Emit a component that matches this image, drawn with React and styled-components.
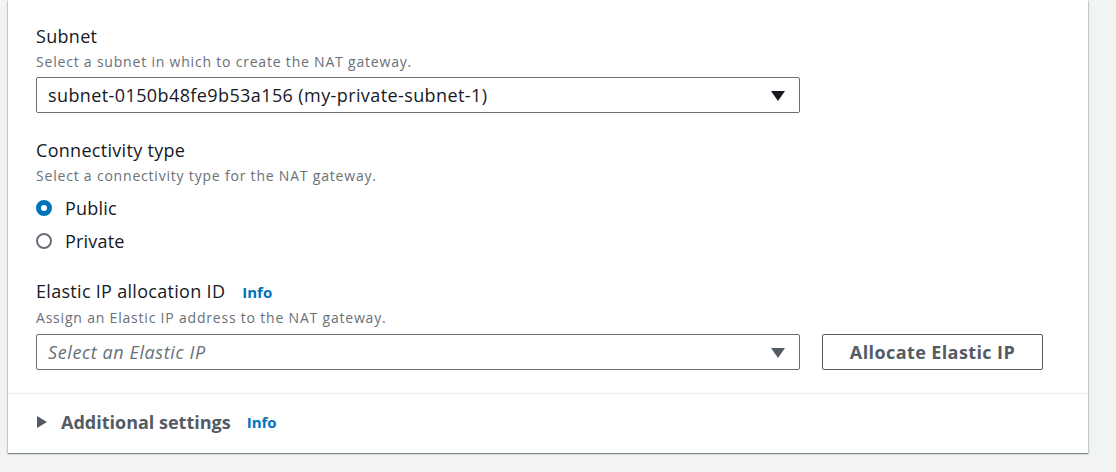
import React from "react";
import styled, { createGlobalStyle } from "styled-components";

const GlobalStyle = createGlobalStyle`
  html, body {
    margin: 0;
    padding: 0;
    background: #f2f3f3;
    font-family: "Open Sans", "Noto Sans", Arial, sans-serif;
  }
`;

const Page = styled.div`
  padding: 0 0 19px 8px;
`;

const Card = styled.div`
  width: 1080px;
  background: #fff;
  box-shadow: 0 1px 1px 0 rgba(0, 28, 36, 0.3), 1px 1px 1px 0 rgba(0, 28, 36, 0.15),
    -1px 1px 1px 0 rgba(0, 28, 36, 0.15);
`;

const Body = styled.div`
  padding: 25px 28px 23px 28px;
`;

const Field = styled.div`
  margin-bottom: ${(p) => p.$gap || 0}px;
`;

const Label = styled.div`
  display: flex;
  align-items: baseline;
  font-size: 18px;
  line-height: 22px;
  letter-spacing: 0.3px;
  color: #16191f;
`;

const Info = styled.a`
  margin-left: ${(p) => p.$ml || 17}px;
  font-size: 15px;
  font-weight: 700;
  letter-spacing: 0;
  color: #0073bb;
  text-decoration: none;
`;

const Description = styled.div`
  margin-top: 5px;
  font-size: 14px;
  line-height: 20px;
  letter-spacing: 0.8px;
  color: #687078;
`;

const ControlRow = styled.div`
  display: flex;
  align-items: center;
  gap: 22px;
  margin-top: ${(p) => p.$mt || 6}px;
`;

const Select = styled.div`
  box-sizing: border-box;
  width: 764px;
  height: 36px;
  display: flex;
  align-items: center;
  justify-content: space-between;
  padding: 0 14px 0 11px;
  border: 1px solid #687078;
  border-radius: 2px;
  font-size: 18px;
  letter-spacing: ${(p) => (p.$placeholder ? "0.6px" : "0.4px")};
  color: ${(p) => (p.$placeholder ? "#687078" : "#16191f")};
  font-style: ${(p) => (p.$placeholder ? "italic" : "normal")};
`;

const Caret = styled.span`
  width: 0;
  height: 0;
  border-left: 7px solid transparent;
  border-right: 7px solid transparent;
  border-top: 10px solid ${(p) => p.$color};
  margin-top: 1px;
`;

const Button = styled.button`
  box-sizing: border-box;
  width: 221px;
  height: 36px;
  background: #fff;
  border: 1px solid #545b64;
  border-radius: 2px;
  font-family: inherit;
  font-size: 18px;
  font-weight: 700;
  letter-spacing: 0.4px;
  color: #545b64;
  cursor: pointer;
`;

const RadioGroup = styled.div`
  display: flex;
  flex-direction: column;
  gap: 11px;
  margin-top: 11px;
`;

const RadioRow = styled.label`
  display: flex;
  align-items: center;
  gap: 13px;
  font-size: 18px;
  line-height: 22px;
  letter-spacing: 0.2px;
  color: #16191f;
`;

const RadioDot = styled.span`
  box-sizing: border-box;
  width: 16px;
  height: 16px;
  border-radius: 50%;
  border: ${(p) => (p.$checked ? "5px solid #0073bb" : "2px solid #687078")};
  background: #fff;
  flex-shrink: 0;
`;

const Footer = styled.div`
  border-top: 1px solid #eaeded;
  padding: 17px 28px 20px 29px;
  display: flex;
  align-items: center;
`;

const Expander = styled.span`
  width: 0;
  height: 0;
  border-top: 6px solid transparent;
  border-bottom: 6px solid transparent;
  border-left: 10px solid #545b64;
  margin-right: 14px;
`;

const FooterTitle = styled.span`
  font-size: 18px;
  line-height: 22px;
  font-weight: 700;
  color: #545b64;
`;

export default function App() {
  return (
    <>
      <GlobalStyle />
      <Page>
        <Card>
          <Body>
            <Field $gap={26}>
              <Label>Subnet</Label>
              <Description>Select a subnet in which to create the NAT gateway.</Description>
              <ControlRow $mt={5}>
                <Select>
                  <span>subnet-0150b48fe9b53a156 (my-private-subnet-1)</span>
                  <Caret $color="#16191f" />
                </Select>
              </ControlRow>
            </Field>
            <Field $gap={28}>
              <Label>Connectivity type</Label>
              <Description>Select a connectivity type for the NAT gateway.</Description>
              <RadioGroup>
                <RadioRow>
                  <RadioDot $checked />
                  Public
                </RadioRow>
                <RadioRow>
                  <RadioDot />
                  Private
                </RadioRow>
              </RadioGroup>
            </Field>
            <Field>
              <Label>
                Elastic IP allocation ID
                <Info href="#">Info</Info>
              </Label>
              <Description>Assign an Elastic IP address to the NAT gateway.</Description>
              <ControlRow $mt={6}>
                <Select $placeholder>
                  <span>Select an Elastic IP</span>
                  <Caret $color="#545b64" />
                </Select>
                <Button>Allocate Elastic IP</Button>
              </ControlRow>
            </Field>
          </Body>
          <Footer>
            <Expander />
            <FooterTitle>Additional settings</FooterTitle>
            <Info href="#" $ml={16}>Info</Info>
          </Footer>
        </Card>
      </Page>
    </>
  );
}
